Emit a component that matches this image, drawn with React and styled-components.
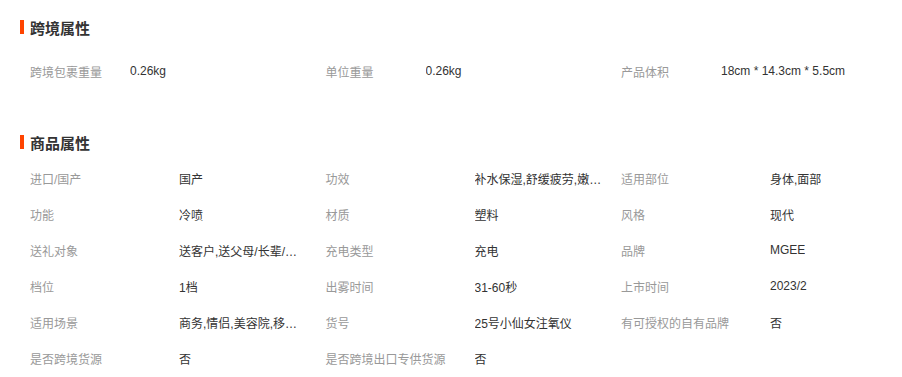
import styled, { createGlobalStyle } from "styled-components";

const GlobalStyle = createGlobalStyle`
  body {
    margin: 0;
    background: #fff;
    font-family: "Liberation Sans", "Noto Sans CJK SC", sans-serif;
  }
`;

const crossBorder = [
  { label: "跨境包裹重量", value: "0.26kg" },
  { label: "单位重量", value: "0.26kg" },
  { label: "产品体积", value: "18cm * 14.3cm * 5.5cm" },
];

const productAttrs = [
  { label: "进口/国产", value: "国产" },
  { label: "功效", value: "补水保湿,舒缓疲劳,嫩肤,提亮肤色" },
  { label: "适用部位", value: "身体,面部" },
  { label: "功能", value: "冷喷" },
  { label: "材质", value: "塑料" },
  { label: "风格", value: "现代" },
  { label: "送礼对象", value: "送客户,送父母/长辈/朋友" },
  { label: "充电类型", value: "充电" },
  { label: "品牌", value: "MGEE" },
  { label: "档位", value: "1档" },
  { label: "出雾时间", value: "31-60秒" },
  { label: "上市时间", value: "2023/2" },
  { label: "适用场景", value: "商务,情侣,美容院,移动办公" },
  { label: "货号", value: "25号小仙女注氧仪" },
  { label: "有可授权的自有品牌", value: "否" },
  { label: "是否跨境货源", value: "否" },
  { label: "是否跨境出口专供货源", value: "否" },
];

export default function App() {
  return (
    <>
      <GlobalStyle />
      <Page>
        <Title>跨境属性</Title>
        <Grid $top={16} $bottom={43}>
          {crossBorder.map((a) => (
            <Cell key={a.label}>
              <Label $width={100}>{a.label}</Label>
              <Value>{a.value}</Value>
            </Cell>
          ))}
        </Grid>
        <Title>商品属性</Title>
        <Grid $top={8} $bottom={0}>
          {productAttrs.map((a) => (
            <Cell key={a.label}>
              <Label $width={149}>{a.label}</Label>
              <Value title={a.value}>{a.value}</Value>
            </Cell>
          ))}
        </Grid>
      </Page>
    </>
  );
}

const Page = styled.div`
  padding: 17px 0 0 20px;
`;

const Title = styled.div`
  display: flex;
  align-items: center;
  height: 20px;
  font-size: 15px;
  font-weight: bold;
  color: #333;
  font-family: "Noto Sans CJK SC", sans-serif;

  &::before {
    content: "";
    width: 4px;
    height: 14px;
    margin-right: 6px;
    background: #ff4400;
  }
`;

const Grid = styled.div`
  display: grid;
  grid-template-columns: repeat(3, 295.5px);
  margin: ${(p) => p.$top}px 0 ${(p) => p.$bottom}px 10px;
`;

const Cell = styled.div`
  display: flex;
  align-items: center;
  height: 36px;
  font-size: 12px;
`;

const Label = styled.span`
  flex: 0 0 ${(p) => p.$width}px;
  color: #999;
  white-space: nowrap;
`;

const Value = styled.span`
  max-width: 127px;
  color: #333;
  white-space: nowrap;
  overflow: hidden;
  text-overflow: ellipsis;
`;
